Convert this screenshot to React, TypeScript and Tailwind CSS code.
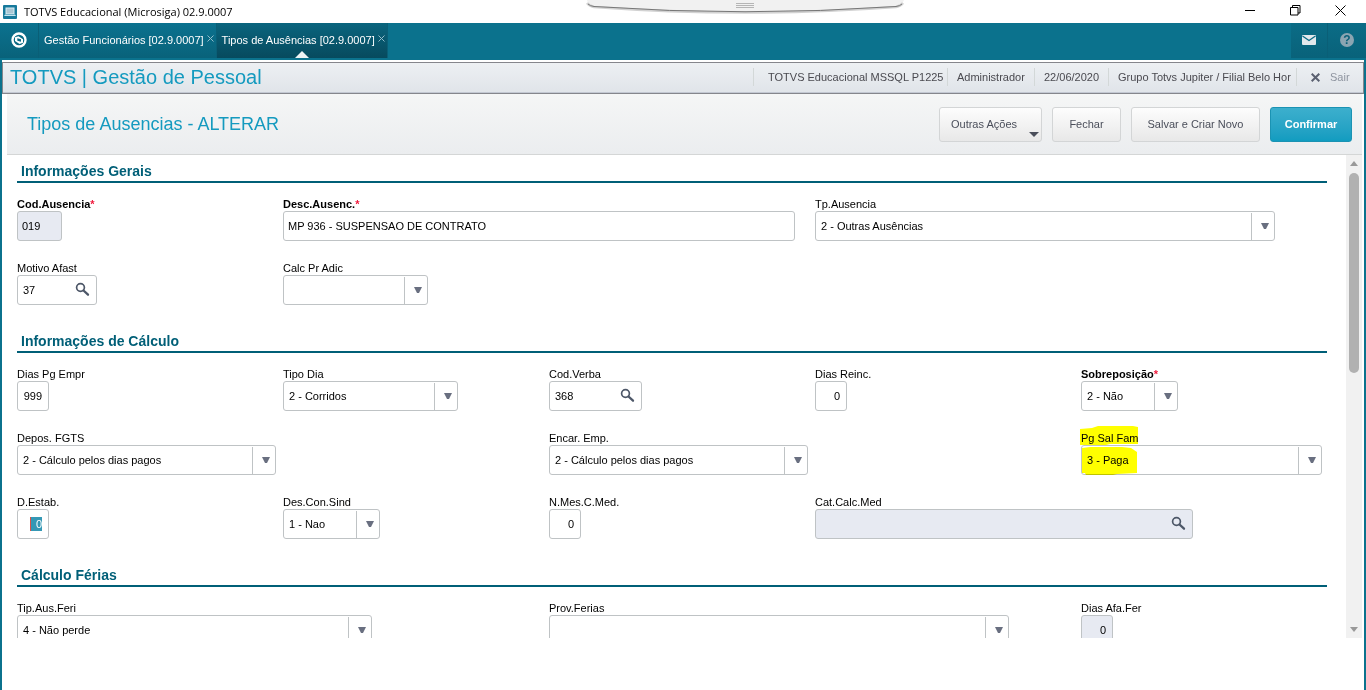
import type { ReactNode } from "react";

const BOX = "rounded-[3px] border border-[#bfc3c5] text-[11px] leading-[14px] text-black outline-none";

interface FieldProps {
  id: string;
  label: string;
  required?: boolean;
  className?: string;
  children: ReactNode;
}

function Field({ id, label, required, className = "", children }: FieldProps) {
  return (
    <div className={`relative ${className}`}>
      <label
        htmlFor={id}
        className={`block h-[14px] whitespace-nowrap text-[11px] leading-[14px] ${required ? "font-bold" : ""}`}
      >
        {label}
        {required && <span className="text-[#f0193c]">*</span>}
      </label>
      {children}
    </div>
  );
}

interface InputProps {
  id: string;
  value: string;
  className: string;
  disabled?: boolean;
}

function TextInput({ id, value, className, disabled }: InputProps) {
  return (
    <input
      id={id}
      type="text"
      defaultValue={value}
      disabled={disabled}
      className={`${BOX} block h-[30px] pr-[6px] pl-1 disabled:bg-[#e7eaf2] ${className}`}
    />
  );
}

function SelectInput({ id, value, className }: InputProps) {
  return (
    <div className={`relative h-[30px] ${className}`}>
      <select id={id} className={`${BOX} block h-full w-full appearance-none bg-white pr-6 pl-[5px]`}>
        <option>{value}</option>
      </select>
      <span className="pointer-events-none absolute top-[2px] right-px bottom-px flex w-[23px] items-center justify-center border-l border-[#bfc3c5] pb-[2px] pl-[3px]">
        <svg width="8" height="6" viewBox="0 0 8 6" fill="#696f80">
          <path d="M0 0h8L5 6H3z" />
        </svg>
      </span>
    </div>
  );
}

function LookupInput({ id, value, className, disabled }: InputProps) {
  return (
    <div className={`${BOX} flex h-[30px] items-center ${disabled ? "bg-[#e7eaf2]" : "bg-white"} ${className}`}>
      <input
        id={id}
        type="text"
        defaultValue={value}
        disabled={disabled}
        className="h-full min-w-0 flex-1 pl-[5px] outline-none"
      />
      <button type="button" aria-label="Pesquisar" disabled={disabled} className="mr-[6px] pb-[2px]">
        <svg width="15" height="15" viewBox="0 0 15 15" fill="none" stroke="#4d5768">
          <circle cx="5.500" cy="5.500" r="3.900" strokeWidth="1.700" />
          <path d="M8.500 8.500l4.500 4.200" strokeWidth="2.300" strokeLinecap="round" />
        </svg>
      </button>
    </div>
  );
}

function Section({ title, children }: { title: string; children: ReactNode }) {
  return (
    <section>
      <h3 className="h-7 border-b-2 border-[#005f77] pt-[7px] pl-1 text-[14px] leading-[18px] font-bold text-[#005f77]">
        {title}
      </h3>
      <div className="grid grid-cols-5 gap-5 pt-[14px]">{children}</div>
    </section>
  );
}

function TitleBar() {
  return (
    <div className="relative flex h-[23px] shrink-0 items-center bg-white">
      <svg className="ml-[3px]" width="14" height="14" viewBox="0 0 14 14">
        <rect width="14" height="14" rx="1" fill="#16799b" />
        <rect x="2.500" y="2.500" width="9" height="6.500" fill="#d9eef5" />
        <rect x="3.500" y="3.500" width="7" height="5" fill="#a9c6d4" />
        <path d="M2 9.500h10l1 1.500H1z" fill="#c3e3ee" />
      </svg>
      <h1 className="ml-[7px] font-['Open_Sans',sans-serif] text-[11px] leading-4 text-black">
        TOTVS Educacional (Microsiga) 02.9.0007
      </h1>
      {/* Remote session handle hanging from the top edge */}
      <svg className="absolute top-0 left-[586px]" width="320" height="15" viewBox="0 0 320 15">
        <path d="M1 0Q2 6 8 7Q159 17 310 7Q316 6 318 0z" fill="#f1f1f1" />
        <path d="M1 3Q3 6 8 7Q159 18 310 7Q315 6 317 3" fill="none" stroke="#d2d2d2" strokeWidth="2.500" />
        <path d="M2 4Q4 6 8 6.500Q159 17 310 6.500Q314 6 316 4" fill="none" stroke="#777" />
        <path d="M150 3.500h18M150 5.500h18M150 7.500h18" stroke="#b5b5b5" />
      </svg>
      <div className="ml-auto flex items-center pb-[2px]">
        <button type="button" aria-label="Minimizar" className="flex w-[45px] justify-center">
          <svg width="11" height="11" viewBox="0 0 11 11" stroke="#000">
            <path d="M0 5.500h10" />
          </svg>
        </button>
        <button type="button" aria-label="Restaurar" className="flex w-[45px] justify-center">
          <svg width="11" height="11" viewBox="0 0 11 11" fill="none" stroke="#000">
            <path d="M.5 2.500h7.500v7.500H.5zM2.500 2.500V.5h7.500v7.500H8" />
          </svg>
        </button>
        <button type="button" aria-label="Fechar janela" className="mr-[3px] flex w-[45px] justify-center">
          <svg width="11" height="11" viewBox="0 0 11 11" stroke="#000">
            <path d="M.5.5l10 10M10.500.5l-10 10" />
          </svg>
        </button>
      </div>
    </div>
  );
}

function Tab({ title, active }: { title: string; active?: boolean }) {
  return (
    <div
      className={`relative flex h-[35px] items-center gap-[3px] border-r border-[#0a5f77] bg-gradient-to-b pr-[2px] pb-[2px] pl-[5px] ${
        active ? "from-[#0a657e] to-[#074a5e]" : "from-[#0b728f] to-[#09627a]"
      }`}
    >
      <a href="#" className="text-[11px] leading-[14px] whitespace-nowrap text-white">
        {title}
      </a>
      <button type="button" aria-label={`Fechar ${title}`} className="pb-[2px]">
        <svg width="7" height="7" viewBox="0 0 7 7" stroke="#93bdca">
          <path d="M.5.5l6 6M6.500.5l-6 6" />
        </svg>
      </button>
      {active && (
        <svg className="absolute bottom-0 left-1/2 -translate-x-1/2" width="14" height="7" viewBox="0 0 14 7" fill="#eef3f5">
          <path d="M7 0l7 7H0z" />
        </svg>
      )}
    </div>
  );
}

function NavBar() {
  return (
    <nav className="flex h-[37px] shrink-0 bg-[#0b728d]">
      <a
        href="#"
        aria-label="Início"
        className="flex h-[35px] w-[39px] items-center justify-center border-r border-[#0a5f77] bg-gradient-to-b from-[#0b728f] to-[#09627a] pb-[2px]"
      >
        <svg width="16" height="16" viewBox="0 0 16 16" fill="none" stroke="#fff">
          <circle cx="8" cy="8" r="6.500" strokeWidth="2.400" />
          <path d="M4 5.200l3.500-1 4.500 3v3.500l-3.500 1.300L4 9z" fill="#fff" stroke="none" />
          <path d="M6.300 6.300l3.700 1v2.500l-3.700-1z" fill="#0a6a85" stroke="none" />
        </svg>
      </a>
      <Tab title="Gestão Funcionários [02.9.0007]" />
      <Tab title="Tipos de Ausências [02.9.0007]" active />
      <div className="ml-auto flex h-[35px]">
        <button
          type="button"
          aria-label="Mensagens"
          className="flex w-[37px] items-center justify-center border-r border-[#0a5f77] bg-gradient-to-b from-[#0b6c86] to-[#09627a] pb-[2px]"
        >
          <svg width="14" height="10" viewBox="0 0 14 10">
            <rect width="14" height="10" rx="1" fill="#e3e8ec" />
            <path d="M.5 1L7 5.500 13.500 1" fill="none" stroke="#0b6c86" strokeWidth="1.300" />
          </svg>
        </button>
        <button
          type="button"
          aria-label="Ajuda"
          className="flex w-[38px] items-center justify-center bg-gradient-to-b from-[#0b6c86] to-[#09627a] pb-[2px]"
        >
          <span className="flex size-[14px] items-center justify-center rounded-full bg-[#8ba5b2] text-[12px] leading-[14px] font-bold text-[#0b6079]">
            ?
          </span>
        </button>
      </div>
    </nav>
  );
}

function ModuleHeader() {
  const cell = "flex h-[18px] items-center border-l border-[#d3d8d8] whitespace-nowrap";
  return (
    <header className="mt-[2px] flex h-8 shrink-0 items-center border border-[#85868c] bg-gradient-to-b from-[#edf0f3] to-[#e0e4e9] pb-[2px] text-[11px] leading-[14px] text-[#4a4a50] shadow-[inset_0_-1px_0_#c3c8d2]">
      <h2 className="pl-[7px] text-[20px] leading-6 text-[#149abf]">TOTVS | Gestão de Pessoal</h2>
      <div className="ml-auto flex">
        <span className={`${cell} w-[194px] pl-[14px]`}>TOTVS Educacional MSSQL P1225</span>
        <span className={`${cell} w-[87px] pl-[9px]`}>Administrador</span>
        <span className={`${cell} w-[74px] pl-[9px]`}>22/06/2020</span>
        <span className={`${cell} w-[188px] pl-[9px]`}>Grupo Totvs Jupiter / Filial Belo Hor</span>
        <button type="button" className={`${cell} w-[67px] gap-[10px] pl-[14px] text-[#8e949f]`}>
          <svg width="9" height="9" viewBox="0 0 9 9" stroke="#5a6070" strokeWidth="2">
            <path d="M.7.7l7.600 7.600M8.300.7L.7 8.300" />
          </svg>
          Sair
        </button>
      </div>
    </header>
  );
}

function Toolbar() {
  const button =
    "h-[35px] rounded-[3px] border border-[#d3d5d6] bg-gradient-to-b from-[#fdfdfd] to-[#e8e8e8] text-[11px] leading-[14px] text-[#4a4e5a]";
  return (
    <div className="mr-[2px] ml-[5px] flex h-[61px] shrink-0 items-center gap-[10px] border-b border-[#d4d6d6] bg-gradient-to-b from-[#f5f6f6] to-[#ebedef] pr-[10px] pl-5">
      <h2 className="mr-auto text-[18px] leading-6 text-[#149abf]">Tipos de Ausencias - ALTERAR</h2>
      <button type="button" className={`${button} relative w-[103px] pr-[13px]`}>
        Outras Ações
        <svg className="absolute right-[2px] bottom-1" width="10" height="5" viewBox="0 0 10 5" fill="#4a4e5a">
          <path d="M0 0h10L5 5z" />
        </svg>
      </button>
      <button type="button" className={`${button} w-[69px]`}>
        Fechar
      </button>
      <button type="button" className={`${button} w-[129px]`}>
        Salvar e Criar Novo
      </button>
      <button
        type="button"
        className="h-[35px] w-[82px] rounded-[3px] border border-[#1b93b3] bg-gradient-to-b from-[#3cafcd] to-[#119cc0] text-[11px] leading-[14px] font-bold text-white"
      >
        Confirmar
      </button>
    </div>
  );
}

function ScrollRail() {
  return (
    <div className="mr-[2px] flex w-4 shrink-0 flex-col items-center bg-[#f1f1f1] py-[6px]">
      <svg width="8" height="5" viewBox="0 0 8 5" fill="#999">
        <path d="M4 0l4 5H0z" />
      </svg>
      <div className="mt-[7px] h-[200px] w-[10px] rounded-full bg-[#b1b1b1]" />
      <svg className="mt-auto" width="8" height="5" viewBox="0 0 8 5" fill="#999">
        <path d="M0 0h8L4 5z" />
      </svg>
    </div>
  );
}

export default function App() {
  return (
    <div className="flex h-screen flex-col overflow-hidden bg-[#0b728d] font-['Liberation_Sans',Arial,sans-serif] text-black">
      <TitleBar />
      <NavBar />
      <main className="mx-[2px] flex min-h-0 flex-1 flex-col bg-white">
        <ModuleHeader />
        <Toolbar />
        <div className="mb-[52px] flex min-h-0 flex-1">
          <form className="flex min-w-0 flex-1 flex-col gap-5 overflow-y-auto pr-[19px] pl-[15px] [scrollbar-width:none]">
            <Section title="Informações Gerais">
              <Field id="cod" label="Cod.Ausencia" required>
                <TextInput id="cod" value="019" disabled className="w-[45px]" />
              </Field>
              <Field id="desc" label="Desc.Ausenc." required className="col-span-2">
                <TextInput id="desc" value="MP 936 - SUSPENSAO DE CONTRATO" className="w-full" />
              </Field>
              <Field id="tipo" label="Tp.Ausencia" className="col-span-2">
                <SelectInput id="tipo" value="2 - Outras Ausências" className="w-[460px]" />
              </Field>
              <Field id="motivo" label="Motivo Afast">
                <LookupInput id="motivo" value="37" className="w-20" />
              </Field>
              <Field id="adic" label="Calc Pr Adic">
                <SelectInput id="adic" value="" className="w-[145px]" />
              </Field>
            </Section>

            <Section title="Informações de Cálculo">
              <Field id="diasPg" label="Dias Pg Empr">
                <TextInput id="diasPg" value="999" className="w-8 text-right" />
              </Field>
              <Field id="tipoDia" label="Tipo Dia">
                <SelectInput id="tipoDia" value="2 - Corridos" className="w-[175px]" />
              </Field>
              <Field id="verba" label="Cod.Verba">
                <LookupInput id="verba" value="368" className="w-[93px]" />
              </Field>
              <Field id="reinc" label="Dias Reinc.">
                <TextInput id="reinc" value="0" className="w-8 text-right" />
              </Field>
              <Field id="sobre" label="Sobreposição" required>
                <SelectInput id="sobre" value="2 - Não" className="w-[97px]" />
              </Field>

              <Field id="fgts" label="Depos. FGTS" className="col-span-2">
                <SelectInput id="fgts" value="2 - Cálculo pelos dias pagos" className="w-[259px]" />
              </Field>
              <Field id="encar" label="Encar. Emp." className="col-span-2">
                <SelectInput id="encar" value="2 - Cálculo pelos dias pagos" className="w-[259px]" />
              </Field>
              <Field id="salFam" label="Pg Sal Fam">
                <SelectInput id="salFam" value="3 - Paga" className="w-[241px]" />
                {/* Marker strokes */}
                <svg
                  className="pointer-events-none absolute -top-[5px] -left-px mix-blend-multiply"
                  width="60"
                  height="50"
                  viewBox="0 0 60 50"
                  fill="#ff0"
                >
                  <path d="M0 3l12-1 6-2h35l5 1v17H30l-4 1H0z" />
                  <path d="M2 22l8-1h32l9 1 6 4v21l-20 1-4 1H6l-1-2H2z" />
                </svg>
              </Field>

              <Field id="estab" label="D.Estab.">
                <div className={`${BOX} flex h-[30px] w-8 items-center justify-end pr-[6px]`}>
                  <input
                    id="estab"
                    type="text"
                    defaultValue="0"
                    className="h-[14px] w-3 border-l border-[#d9534a] bg-[#3598b5] text-right text-white outline-none"
                  />
                </div>
              </Field>
              <Field id="sind" label="Des.Con.Sind">
                <SelectInput id="sind" value="1 - Nao" className="w-[97px]" />
              </Field>
              <Field id="meses" label="N.Mes.C.Med.">
                <TextInput id="meses" value="0" className="w-8 text-right" />
              </Field>
              <Field id="catMed" label="Cat.Calc.Med" className="col-span-2">
                <LookupInput id="catMed" value="" disabled className="w-[378px]" />
              </Field>
            </Section>

            <Section title="Cálculo Férias">
              <Field id="ausFeri" label="Tip.Aus.Feri" className="col-span-2">
                <SelectInput id="ausFeri" value="4 - Não perde" className="w-[355px]" />
              </Field>
              <Field id="prov" label="Prov.Ferias" className="col-span-2">
                <SelectInput id="prov" value="" className="w-[460px]" />
              </Field>
              <Field id="afaFer" label="Dias Afa.Fer">
                <TextInput id="afaFer" value="0" disabled className="w-8 text-right" />
              </Field>
            </Section>
          </form>
          <ScrollRail />
        </div>
      </main>
    </div>
  );
}
